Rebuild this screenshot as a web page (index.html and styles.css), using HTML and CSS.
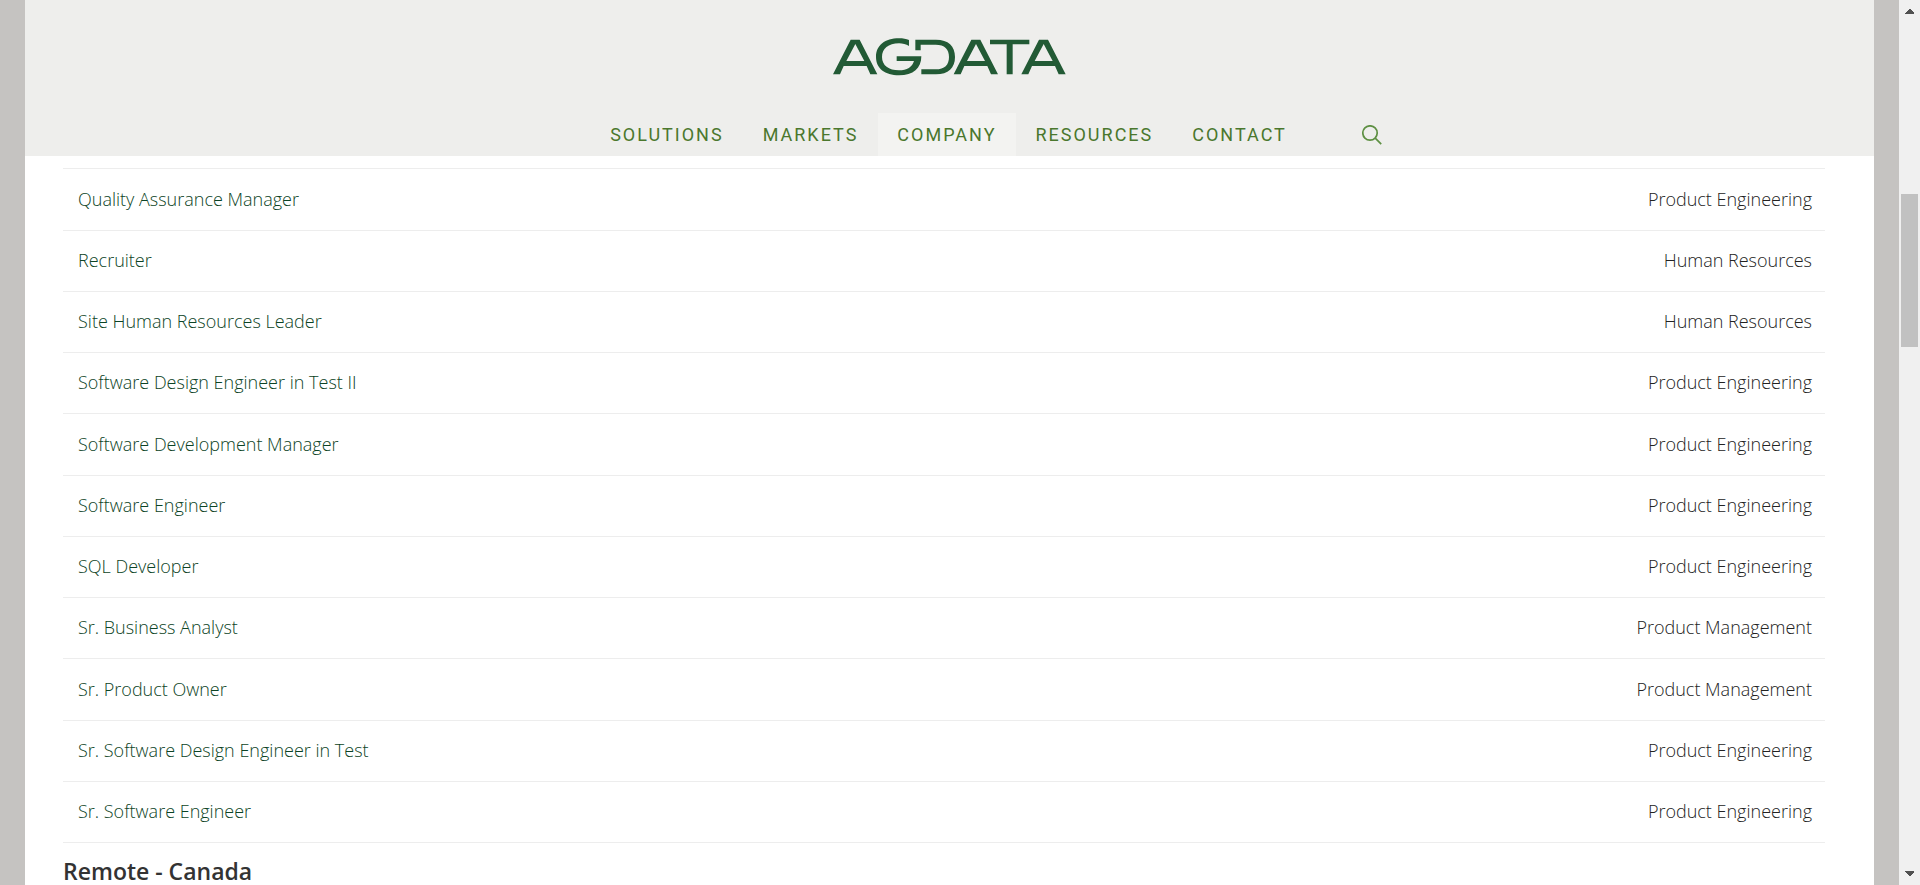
FILE: index.html
```html
<!DOCTYPE html>
<html lang="en">
<head>
<meta charset="utf-8">
<title>AGDATA Careers</title>
<link rel="stylesheet" href="styles.css">
</head>
<body>
<div class="page">
  <header class="header">
    <a class="logo" href="#" aria-label="AGDATA">
      <svg width="233" height="38" viewBox="39 38 699 114" fill="#225a35" aria-hidden="true">
        <defs><path id="letter-a" fill-rule="evenodd" d="M39 147L92 43H119L172 147H151L140 122H71L60 147ZM79 107H133L106 56Z"/></defs>
        <use href="#letter-a"/>
        <path d="M267 44V62C258 57 248 54 237 54C205 54 186 70 186 95C186 120 206 135 237 135C261 135 277 125 282 107H230V93H304C304 129 280 150 237 150C195 150 168 129 168 95C168 60 195 39 237 39C249 39 259 41 267 44Z"/>
        <path d="M286 43H348C385 43 405 62 405 95C405 128 385 147 348 147H304V132H347C374 132 387 119 387 95C387 71 374 58 347 58H302V75H286Z"/>
        <use href="#letter-a" x="362"/>
        <path d="M510 43H628V57H578V147H560V57H510Z"/>
        <use href="#letter-a" x="565"/>
      </svg>
    </a>
    <nav class="nav" aria-label="Main">
      <a class="nav-link" href="#">SOLUTIONS</a>
      <a class="nav-link" href="#">MARKETS</a>
      <a class="nav-link nav-link-active" href="#">COMPANY</a>
      <a class="nav-link" href="#">RESOURCES</a>
      <a class="nav-link" href="#">CONTACT</a>
      <button class="search" type="button" aria-label="Search">
        <svg width="20" height="20" viewBox="0 0 20 20" fill="none" stroke="#5e9043" stroke-width="1.7" aria-hidden="true"><circle cx="8" cy="8" r="7.2"/><path d="M13.2 13.2L19.2 19.2"/></svg>
      </button>
    </nav>
  </header>
  <main class="content">
    <table class="jobs">
      <tbody>
        <tr><td><a href="#">Quality Assurance Manager</a></td><td>Product Engineering</td></tr>
        <tr><td><a href="#">Recruiter</a></td><td>Human Resources</td></tr>
        <tr><td><a href="#">Site Human Resources Leader</a></td><td>Human Resources</td></tr>
        <tr><td><a href="#">Software Design Engineer in Test II</a></td><td>Product Engineering</td></tr>
        <tr><td><a href="#">Software Development Manager</a></td><td>Product Engineering</td></tr>
        <tr><td><a href="#">Software Engineer</a></td><td>Product Engineering</td></tr>
        <tr><td><a href="#">SQL Developer</a></td><td>Product Engineering</td></tr>
        <tr><td><a href="#">Sr. Business Analyst</a></td><td>Product Management</td></tr>
        <tr><td><a href="#">Sr. Product Owner</a></td><td>Product Management</td></tr>
        <tr><td><a href="#">Sr. Software Design Engineer in Test</a></td><td>Product Engineering</td></tr>
        <tr><td><a href="#">Sr. Software Engineer</a></td><td>Product Engineering</td></tr>
      </tbody>
    </table>
    <h2 class="location">Remote - Canada</h2>
  </main>
</div>
<div class="scrollbar" aria-hidden="true">
  <svg width="9" height="5" viewBox="0 0 9 5" fill="#505050" shape-rendering="crispEdges"><path d="M0 5V4L4 0H5L9 4V5Z"/></svg>
  <div class="track"><div class="thumb"></div></div>
  <svg width="9" height="5" viewBox="0 0 9 5" fill="#505050" shape-rendering="crispEdges"><path d="M0 0V1L4 5H5L9 1V0Z"/></svg>
</div>
</body>
</html>
```
FILE: styles.css
```css
* {
  box-sizing: border-box;
}

body {
  margin: 0;
  display: flex;
  height: 100vh;
  overflow: hidden;
  background: #c5c3c1;
  color: #333;
  font-family: "Open Sans", sans-serif;
  font-size: 18px;
}

a {
  color: inherit;
  text-decoration: none;
}

.page {
  flex: 1;
  margin: 0 25px;
  background: #fff;
}

.header {
  display: flex;
  flex-direction: column;
  align-items: center;
  padding-top: 38px;
  background: #eeeeec;
}

.logo {
  display: flex;
  margin-bottom: 37px;
}

.nav {
  display: flex;
  padding-left: 74px;
  font-family: Roboto, sans-serif;
  font-weight: 400;
  letter-spacing: 2px;
  color: #4a772d;
}

.nav-link {
  padding: 0 20px 0 19px;
  line-height: 43px;
}

.nav-link-active {
  background: #f3f3f1;
}

.search {
  display: flex;
  align-items: center;
  margin-left: 55px;
  padding: 0;
  border: 0;
  background: none;
}

.content {
  padding: 12px 49px 0 38px;
}

.jobs {
  width: 100%;
  border-collapse: separate;
  border-spacing: 0;
  border-top: 1px solid #ededed;
}

.jobs td {
  height: 61px;
  padding: 0 13px 2px 15px;
  border-bottom: 1px solid #ededed;
  font-weight: 325;
  line-height: 30px;
}

.jobs tr:nth-child(4n + 1) td {
  height: 62px;
}

.jobs td:first-child {
  color: #0c4325;
}

.jobs td:last-child {
  color: #222;
  text-align: right;
}

.location {
  margin: 11px 0 0;
  font-size: 23px;
  font-weight: 650;
  line-height: 34px;
}

.scrollbar {
  display: flex;
  flex-direction: column;
  align-items: center;
  width: 21px;
  padding: 9px 0;
  background: #f0f0f0;
}

.track {
  flex: 1;
  width: 17px;
  padding-top: 180px;
}

.thumb {
  height: 153px;
  background: #c1c1c1;
}
```
